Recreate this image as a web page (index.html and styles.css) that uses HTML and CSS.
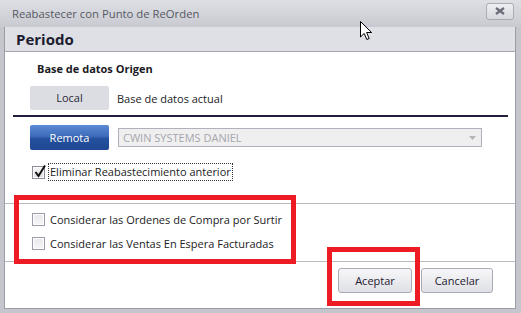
FILE: index.html
```html
<!DOCTYPE html>
<html>

<head>
    <meta name="viewport" content="width=device-width, initial-scale=1">
    <link rel="stylesheet" href="styles.css">
</head>

<body>
    <div class="window">
        <div class="titlebar">
            <span class="title">Reabastecer con Punto de ReOrden</span>
            <span class="close">
                <svg width="12" height="8" viewBox="0 0 12 8">
                    <path d="M2 1 L10 7 M10 1 L2 7" stroke="#6b6c76" stroke-width="2.2" fill="none" />
                </svg>
            </span>
        </div>
        <div class="client">
            <div class="head">Periodo</div>

            <div class="origin">
                <div class="label">Base de datos Origen</div>
                <div class="row">
                    <span class="btn-flat">Local</span>
                    <span>Base de datos actual</span>
                </div>
                <div class="rule"></div>
                <div class="row row-remote">
                    <span class="btn-blue">Remota</span>
                    <span class="combo">
                        CWIN SYSTEMS DANIEL
                        <svg class="arrow" width="7" height="4" viewBox="0 0 7 4">
                            <path d="M0 0 L7 0 L3.5 4 Z" fill="#b3b3ba" />
                        </svg>
                    </span>
                </div>
                <div class="check-row">
                    <span class="box">
                        <svg width="14" height="15" viewBox="0 0 14 15">
                            <path d="M2.5 8 L5.5 12 L12 1.5" stroke="#111" stroke-width="2" fill="none" />
                        </svg>
                    </span>
                    <span class="focus">Eliminar Reabastecimiento anterior</span>
                </div>
            </div>

            <div class="options">
                <div class="opt"><span class="box"></span>Considerar las Ordenes de Compra por Surtir</div>
                <div class="opt"><span class="box"></span>Considerar las Ventas En Espera Facturadas</div>
            </div>

            <div class="footer">
                <span class="btn">Aceptar</span>
                <span class="btn btn-cancel">Cancelar</span>
            </div>
        </div>

        <!-- marcas rojas -->
        <div class="mark mark-options"></div>
        <div class="mark mark-ok"></div>

        <svg class="cursor" width="13" height="20" viewBox="0 0 13 20">
            <path d="M0.5 0.5 L0.5 16 L4.2 12.4 L6.8 18.5 L9.2 17.5 L6.6 11.5 L11.6 11.5 Z" fill="#fff" stroke="#000" stroke-width="1" />
        </svg>
    </div>
</body>

</html>
```

FILE: styles.css
```css
body {
    margin: 0;
    font-family: "Open Sans", "Noto Sans", sans-serif;
    font-size: 11px;
    color: #1b1b24;
}

.window {
    position: relative;
    width: 521px;
    height: 313px;
    box-sizing: border-box;
    padding: 0 5px 4px 4px;
    background: #c4c5cd;
    display: flex;
    flex-direction: column;
}

.titlebar {
    height: 27px;
    margin: 0 -5px 0 -4px;
    padding: 0 7px 0 12px;
    background: linear-gradient(#dedfe4, #c9cad1);
    display: flex;
    align-items: center;
    justify-content: space-between;
}

.title {
    color: #555864;
    font-size: 11.3px;
}

.close {
    width: 26px;
    height: 15px;
    margin-top: -5px;
    border: 1px solid #a9abb5;
    border-radius: 3px;
    background: linear-gradient(#eeeff2, #d7d8de);
    display: flex;
    align-items: center;
    justify-content: center;
}

.client {
    flex: 1;
    background: #fff;
    border: 1px solid #9b9ca6;
    border-top: none;
    display: flex;
    flex-direction: column;
}

.head {
    height: 24px;
    line-height: 24px;
    padding-left: 11px;
    background: #dfe0e6;
    border-bottom: 1px solid #a4a5ae;
    font-size: 15px;
    font-weight: bold;
    color: #1c1c30;
}

.label {
    margin: 9px 0 0 32px;
    line-height: 16px;
    font-weight: bold;
}

.row {
    display: flex;
    align-items: center;
    gap: 8px;
    margin: 9px 0 0 25px;
}

.btn-flat {
    width: 79px;
    height: 24px;
    line-height: 24px;
    text-align: center;
    background: #dcdde3;
    border-radius: 2px;
    color: #2a2a35;
}

.rule {
    height: 2px;
    margin: 5px 7px 0 8px;
    background: #20203a;
}

.row-remote {
    margin-top: 8px;
    gap: 9px;
}

.btn-blue {
    width: 79px;
    height: 25px;
    line-height: 25px;
    text-align: center;
    border-radius: 2px;
    color: #fff;
    background: linear-gradient(#5c8ad3 0%, #3d6cbb 45%, #24509e 55%, #1e4892 100%);
}

.combo {
    position: relative;
    width: 358px;
    height: 17px;
    line-height: 17px;
    padding-left: 4px;
    background: #efefef;
    border: 1px solid #b1b1bd;
    color: #a6a6ae;
}

.arrow {
    position: absolute;
    right: 5px;
    top: 7px;
}

.check-row {
    display: flex;
    align-items: center;
    gap: 3px;
    margin: 13px 0 0 27px;
    height: 18px;
}

.box {
    position: relative;
    width: 11px;
    height: 11px;
    flex: none;
    border: 1px solid #8c8d99;
    background: linear-gradient(#f6f6f8, #dcdde2);
    box-shadow: inset 0 0 0 1px #fff;
}

.box svg {
    position: absolute;
    left: 0;
    top: -3px;
}

.focus {
    padding: 0 1px;
    line-height: 16px;
    border: 1px dotted #333;
}

.options {
    margin-top: 22px;
    padding: 3px 0 6px 27px;
    border-top: 1px solid #b9bac2;
    border-bottom: 1px solid #b9bac2;
}

.opt {
    height: 24px;
    display: flex;
    align-items: center;
    gap: 5px;
}

.opt .box {
    border-color: #9c9daa;
    background: linear-gradient(#e9e9ee, #f7f7f9);
}

.footer {
    display: flex;
    justify-content: flex-end;
    gap: 9px;
    padding: 6px 22px 0 0;
}

.btn {
    width: 72px;
    height: 23px;
    line-height: 23px;
    text-align: center;
    border: 1px solid #a9abb5;
    border-radius: 3px;
    background: linear-gradient(#f7f7f9, #dfe0e5);
    color: #1e2030;
}

.btn-cancel {
    width: 70px;
}

.mark {
    position: absolute;
    border: 5px solid #ed1c24;
    box-sizing: border-box;
}

.mark-options {
    left: 14px;
    top: 195px;
    width: 282px;
    height: 69px;
}

.mark-ok {
    left: 327px;
    top: 247px;
    width: 93px;
    height: 59px;
}

.cursor {
    position: absolute;
    left: 360px;
    top: 21px;
}
```
